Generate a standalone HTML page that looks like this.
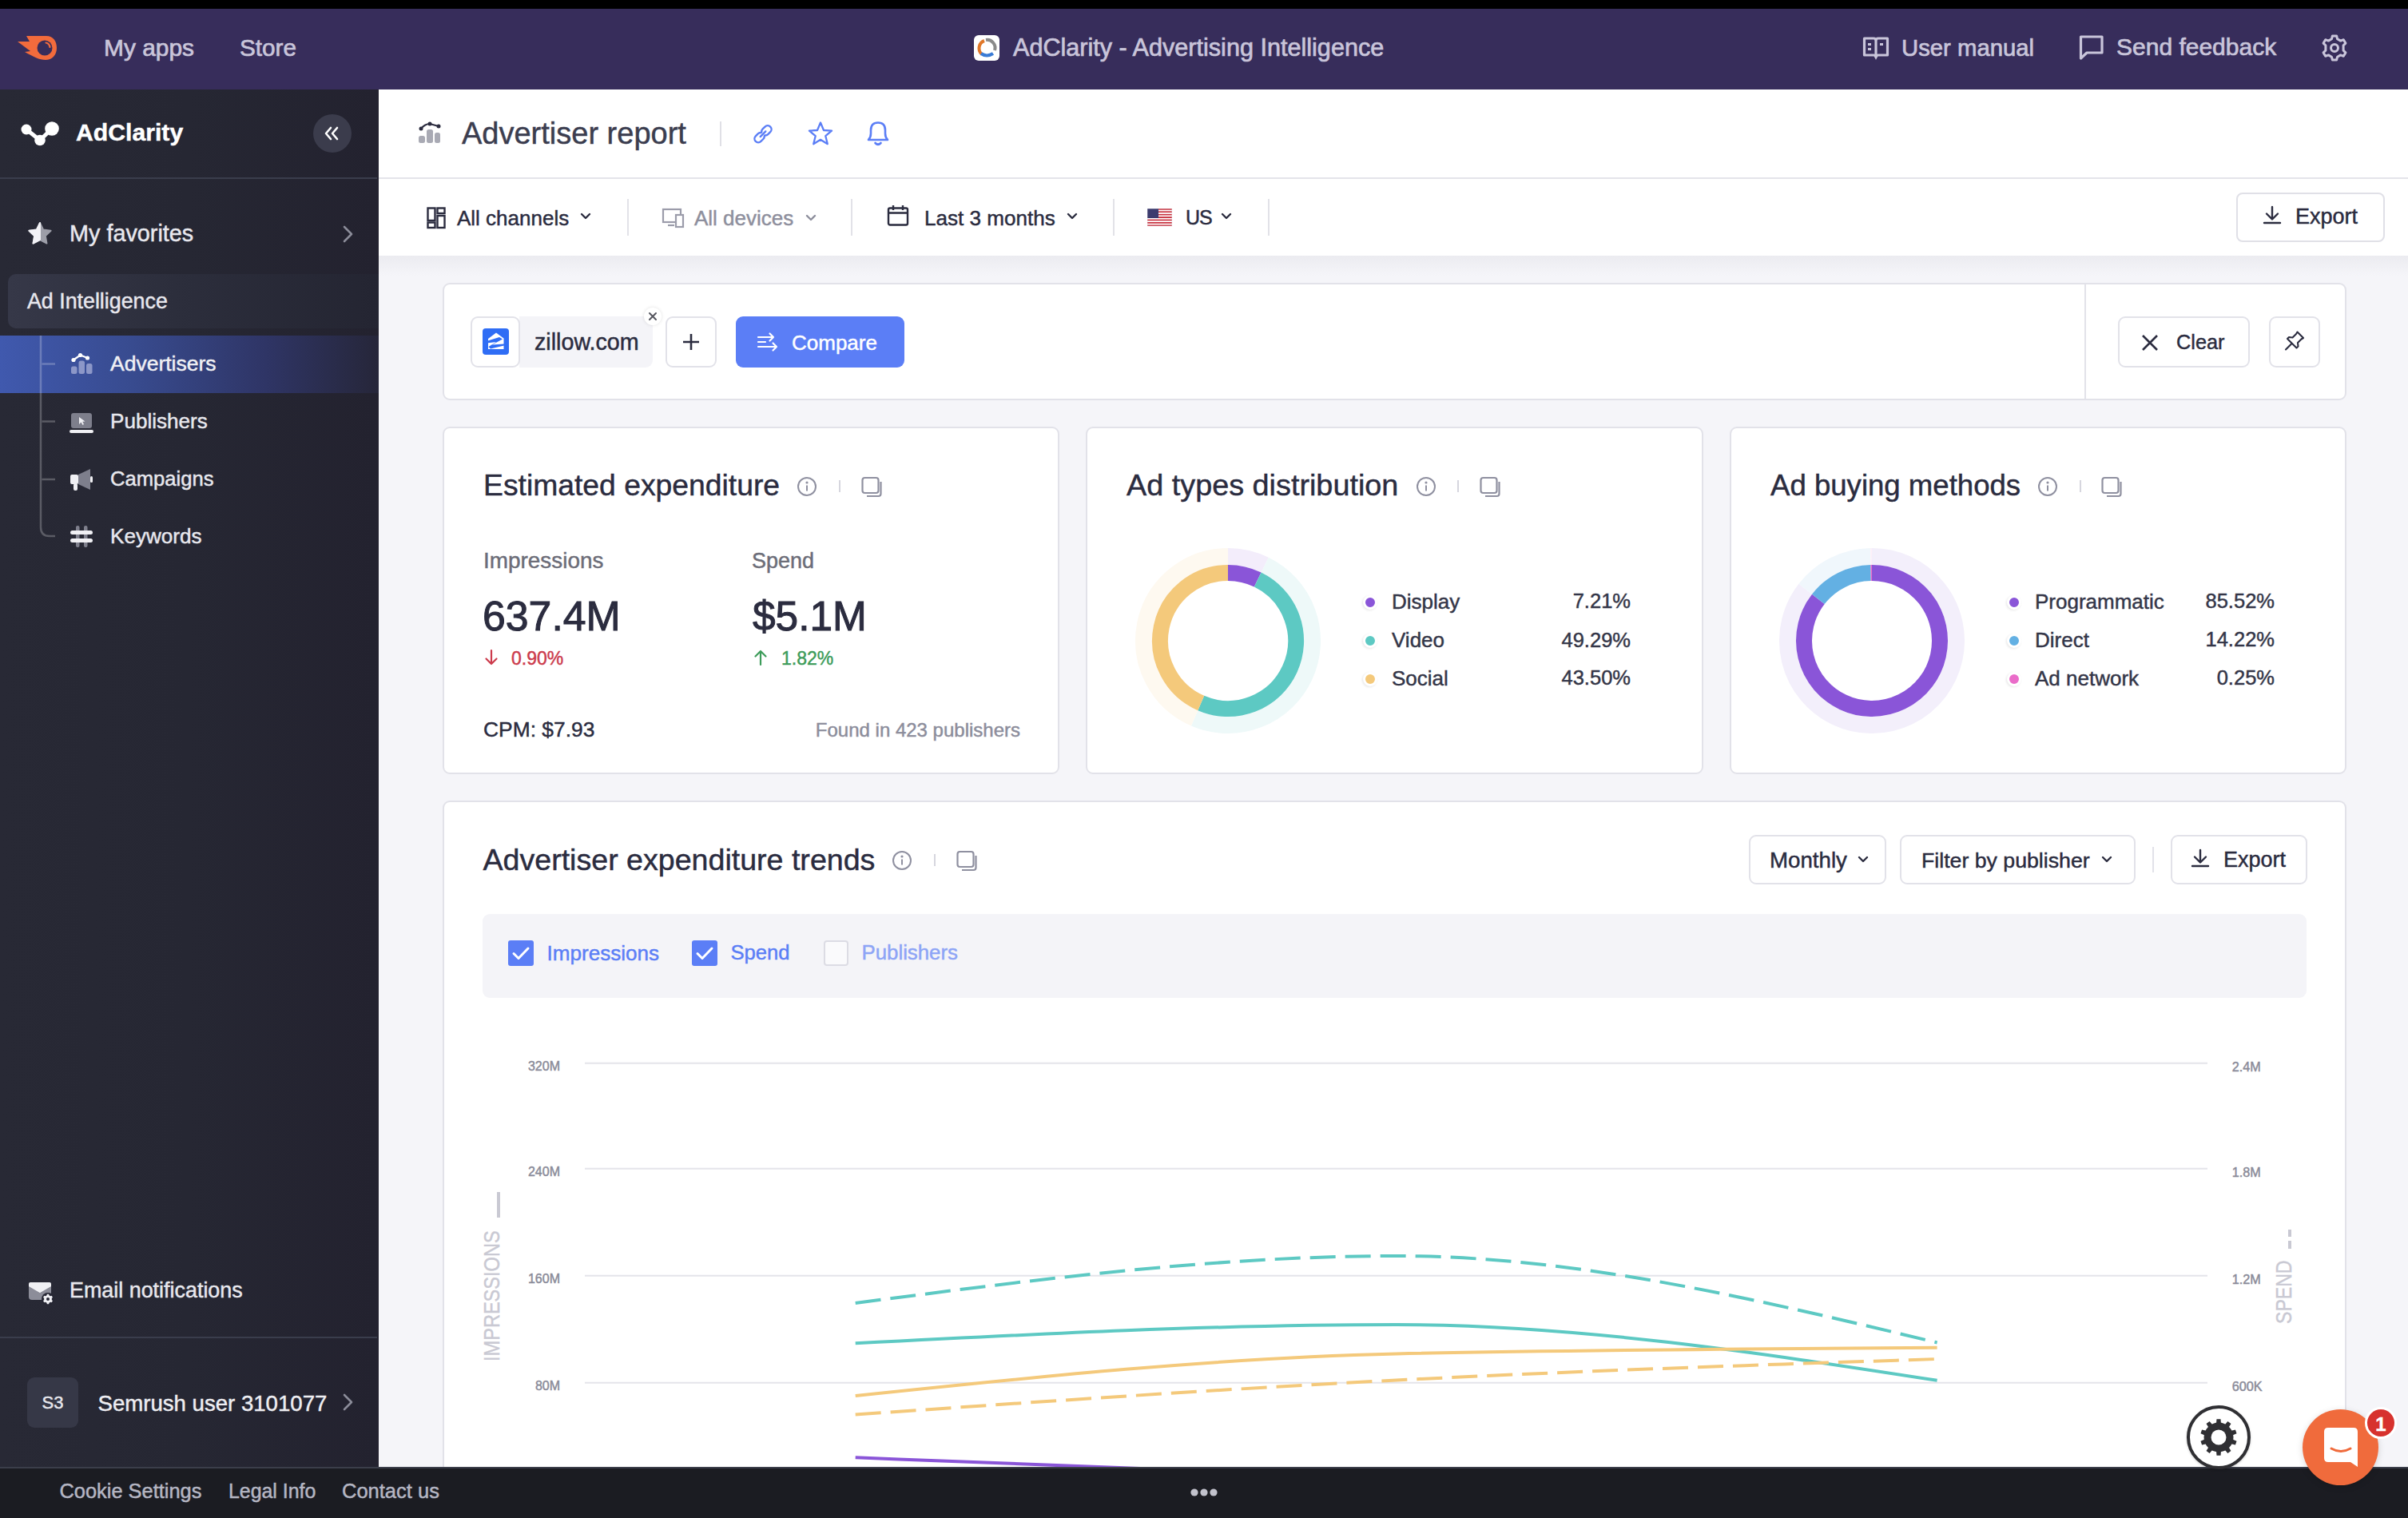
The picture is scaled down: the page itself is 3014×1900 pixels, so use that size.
<!DOCTYPE html>
<html><head><meta charset="utf-8">
<style>
html,body{margin:0;padding:0;width:3014px;height:1900px;overflow:hidden;background:#f5f5f9;}
body{position:relative;font-family:"Liberation Sans",sans-serif;}
.t{position:absolute;white-space:nowrap;-webkit-text-stroke-width:0.45px;}
.r{position:absolute;box-sizing:border-box;}
</style></head><body>
<div class="r" style="left:0px;top:0px;width:3014px;height:11px;background:#000"></div>
<div class="r" style="left:0px;top:11px;width:3014px;height:101px;background:#372d5b"></div>
<div class="r" style="left:0px;top:112px;width:474px;height:1725px;background:linear-gradient(90deg,#282935 0%,#262733 50%,#23222f 100%)"></div>
<div class="r" style="left:474px;top:112px;width:2540px;height:1725px;background:#f5f5f9"></div>
<div class="r" style="left:474px;top:112px;width:2540px;height:111px;background:#fff"></div>
<div class="r" style="left:474px;top:222px;width:2540px;height:2px;background:#e4e4ea"></div>
<div class="r" style="left:474px;top:224px;width:2540px;height:96px;background:#fff"></div>
<div class="r" style="left:474px;top:320px;width:2540px;height:36px;background:linear-gradient(#ebebf0,#f5f5f9 70%)"></div>
<svg class="r" style="left:20px;top:43px;" width="52" height="34" viewBox="0 0 52 34"><path d="M13 2 L38 2 C47 2 51 9 51 17 C51 26 45 32 37 32 C29 32 22 28 11 22 L18 21 L2 9 L17 9 Z" fill="#f26b3c"/>
<circle cx="36" cy="17" r="9.5" fill="#372d5b"/>
<path d="M37.5 10.5 A6.5 6.5 0 0 1 42.5 16" stroke="#f26b3c" stroke-width="2.2" fill="none" stroke-linecap="round"/></svg>
<div class="t " style="left:130px;top:44.5px;font-size:29.9px;line-height:29.9px;color:#c9c5da;font-weight:400;-webkit-text-stroke-width:0.7px;">My apps</div>
<div class="t " style="left:300px;top:44.7px;font-size:29.7px;line-height:29.7px;color:#c9c5da;font-weight:400;-webkit-text-stroke-width:0.7px;">Store</div>
<svg class="r" style="left:1219px;top:44px;" width="32" height="32" viewBox="0 0 32 32"><rect x="0" y="0" width="32" height="32" rx="6" fill="#fff"/>
<path d="M10 24 A10 10 0 0 1 13 7" stroke="#e0782a" stroke-width="4" fill="none"/>
<path d="M15 6 A10 10 0 0 1 26 19" stroke="#8a8a8a" stroke-width="4" fill="none"/>
<path d="M9 23 Q16 28 24 23" stroke="#3a7bd5" stroke-width="4" fill="none"/>
<circle cx="16" cy="15" r="5" fill="none" stroke="#fff" stroke-width="1"/></svg>
<div class="t " style="left:1268px;top:43.9px;font-size:30.6px;line-height:30.6px;color:#c9c5da;font-weight:400;-webkit-text-stroke-width:0.7px;">AdClarity - Advertising Intelligence</div>
<svg class="r" style="left:2331px;top:43px;" width="34" height="34" viewBox="0 0 34 34"><path d="M2.5 5 H14 Q17 5 17 8 V28 Q17 26 14 26 H2.5 Z M31.5 5 H20 Q17 5 17 8 V28 Q17 26 20 26 H31.5 Z" fill="none" stroke="#c9c5da" stroke-width="3.2" stroke-linejoin="round"/>
<rect x="7" y="11" width="4" height="3" fill="#c9c5da"/><rect x="7" y="17" width="4" height="3" fill="#c9c5da"/><rect x="22" y="11" width="4" height="3" fill="#c9c5da"/>
<path d="M15 28 L17 32 L19 28" fill="#c9c5da"/></svg>
<div class="t " style="left:2380px;top:44.7px;font-size:29.3px;line-height:29.3px;color:#c9c5da;font-weight:400;-webkit-text-stroke-width:0.7px;">User manual</div>
<svg class="r" style="left:2602px;top:43px;" width="32" height="33" viewBox="0 0 32 33"><path d="M2.5 3 H29 V23 H10 L2.5 30 Z" fill="none" stroke="#c9c5da" stroke-width="3.2" stroke-linejoin="round"/></svg>
<div class="t " style="left:2649px;top:44.1px;font-size:30px;line-height:30px;color:#c9c5da;font-weight:400;-webkit-text-stroke-width:0.7px;">Send feedback</div>
<svg class="r" style="left:2904px;top:42px;" width="36" height="36" viewBox="0 0 36 36"><g transform="translate(18,18)" fill="none" stroke="#c9c5da" stroke-width="3">
<path d="M-2.6 -15 H2.6 L3.6 -11.2 L7.6 -8.9 L11.3 -10.3 L13.9 -5.9 L11.1 -3.2 V3.2 L13.9 5.9 L11.3 10.3 L7.6 8.9 L3.6 11.2 L2.6 15 H-2.6 L-3.6 11.2 L-7.6 8.9 L-11.3 10.3 L-13.9 5.9 L-11.1 3.2 V-3.2 L-13.9 -5.9 L-11.3 -10.3 L-7.6 -8.9 L-3.6 -11.2 Z" stroke-linejoin="round"/>
<circle r="4.5"/></g></svg>
<svg class="r" style="left:24px;top:150px;" width="52" height="34" viewBox="0 0 52 34"><path d="M9 12 L26 25.5 L41 11" stroke="#fff" stroke-width="5" fill="none"/>
<circle cx="9" cy="12" r="6.5" fill="#fff"/><circle cx="26" cy="25.5" r="6.8" fill="#fff"/><circle cx="41" cy="11" r="8.8" fill="#fff"/></svg>
<div class="t " style="left:95px;top:150.9px;font-size:30.2px;line-height:30.2px;color:#ffffff;font-weight:700;">AdClarity</div>
<div class="r" style="left:392px;top:143px;width:48px;height:48px;border-radius:50%;background:#3b3c4c"></div>
<svg class="r" style="left:405px;top:157px;" width="22" height="20" viewBox="0 0 22 20"><path d="M9 3 L3 10 L9 17 M17 3 L11 10 L17 17" stroke="#fff" stroke-width="2.6" fill="none" stroke-linecap="round" stroke-linejoin="round"/></svg>
<div class="r" style="left:0px;top:222px;width:472px;height:2px;background:#3a3d4c"></div>
<svg class="r" style="left:34px;top:277px;" width="32" height="30" viewBox="0 0 32 30"><path d="M16 2 L20.2 10.6 L29.6 11.8 L22.8 18.3 L24.5 27.6 L16 23.1 L7.5 27.6 L9.2 18.3 L2.4 11.8 L11.8 10.6 Z" fill="#9d9ea8" stroke="#9d9ea8" stroke-width="2" stroke-linejoin="round"/>
<path d="M16 2 L11.8 10.6 L2.4 11.8 L9.2 18.3 L7.5 27.6 L16 23.1 Z" fill="#f2f2f6" stroke="#f2f2f6" stroke-width="2" stroke-linejoin="round"/></svg>
<div class="t " style="left:87px;top:278.4px;font-size:28.8px;line-height:28.8px;color:#e8e8ee;font-weight:400;">My favorites</div>
<svg class="r" style="left:426px;top:280px;" width="20" height="26" viewBox="0 0 20 26"><path d="M5 4 L14 13 L5 22" stroke="#8b8c99" stroke-width="2.6" fill="none" stroke-linecap="round" stroke-linejoin="round"/></svg>
<div class="r" style="left:10px;top:343px;width:464px;height:68px;border-radius:10px 0 0 10px;background:linear-gradient(90deg,#363848 0%,#2c2e3c 45%,#242532 100%)"></div>
<div class="t " style="left:34px;top:363.8px;font-size:26.8px;line-height:26.8px;color:#e8e8ee;font-weight:400;">Ad Intelligence</div>
<div class="r" style="left:0px;top:420px;width:474px;height:72px;background:linear-gradient(90deg,#4059ae 0%,#384b8f 35%,#2f3566 70%,#262639 100%)"></div>
<svg class="r" style="left:40px;top:420px;" width="40" height="260" viewBox="0 0 40 260"><path d="M11 0 V240 Q11 251 22 251 H29" stroke="rgba(255,255,255,0.24)" stroke-width="2.5" fill="none"/>
<path d="M12.5 35.6 H29 M12.5 107.6 H29 M12.5 180 H29" stroke="rgba(255,255,255,0.24)" stroke-width="2.5" fill="none"/></svg>
<svg class="r" style="left:86px;top:440px;" width="32" height="32" viewBox="0 0 32 32"><rect x="3" y="18.5" width="7.5" height="9.5" rx="2.5" fill="#8c97c8"/><rect x="12.5" y="11.5" width="7.5" height="16.5" rx="2.5" fill="#8c97c8"/><rect x="22" y="15" width="7.5" height="13" rx="2.5" fill="#8c97c8"/>
<path d="M6 10.5 L14.5 4.5 L23.5 8" stroke="#fff" stroke-width="2.2" fill="none"/><circle cx="6" cy="10.5" r="2.6" fill="#fff"/><circle cx="14.5" cy="4.5" r="2.6" fill="#fff"/><circle cx="23.5" cy="8" r="2.6" fill="#fff"/></svg>
<div class="t " style="left:138px;top:441.6px;font-size:26.5px;line-height:26.5px;color:#f0f0f4;font-weight:400;">Advertisers</div>
<svg class="r" style="left:86px;top:514px;" width="32" height="32" viewBox="0 0 32 32"><rect x="3" y="3" width="26" height="19" rx="3" fill="#7e7f8c"/><rect x="1" y="24" width="30" height="4" rx="2" fill="#f0f0f4"/>
<path d="M13 8 L13 17 L15.5 14.5 L17.5 18 L19 17 L17.2 13.8 L20.5 13.5 Z" fill="#f0f0f4"/></svg>
<div class="t " style="left:138px;top:513.9px;font-size:26.1px;line-height:26.1px;color:#e8e8ee;font-weight:400;">Publishers</div>
<svg class="r" style="left:86px;top:585px;" width="32" height="32" viewBox="0 0 32 32"><path d="M12 9 L27 2 V28 L12 21 Z" fill="#7e7f8c"/><rect x="2" y="9" width="10" height="12" rx="2" fill="#f0f0f4"/><rect x="6" y="20" width="5" height="9" rx="2" fill="#f0f0f4"/>
<rect x="27" y="11" width="3" height="8" rx="1.5" fill="#f0f0f4"/></svg>
<div class="t " style="left:138px;top:586.8px;font-size:25.6px;line-height:25.6px;color:#e8e8ee;font-weight:400;">Campaigns</div>
<svg class="r" style="left:86px;top:656px;" width="32" height="32" viewBox="0 0 32 32"><rect x="9" y="2" width="4.5" height="27" rx="2" fill="#7e7f8c"/><rect x="19" y="2" width="4.5" height="27" rx="2" fill="#7e7f8c"/>
<rect x="2" y="8" width="28" height="5" rx="2.5" fill="#f0f0f4"/><rect x="2" y="18" width="28" height="5" rx="2.5" fill="#f0f0f4"/></svg>
<div class="t " style="left:138px;top:658.4px;font-size:26.1px;line-height:26.1px;color:#e8e8ee;font-weight:400;">Keywords</div>
<svg class="r" style="left:34px;top:1602px;" width="36" height="34" viewBox="0 0 36 34"><rect x="2" y="3" width="28" height="22" rx="4" fill="#8c8d99"/><path d="M3 8 L16 16 L29 8 V4 H3 Z" fill="#f0f0f4"/>
<path d="M2 5 Q2 3 4 3 H28 Q30 3 30 5 V8 L16 16 L2 8 Z" fill="#f0f0f4"/><path d="M2 10 L16 18.5 L30 10" stroke="#8c8d99" stroke-width="0" fill="none"/>
<circle cx="26" cy="24" r="8" fill="#252633"/><path d="M24.55 19.63 L24.75 17.83 L27.25 17.83 L27.45 19.63 L29.06 20.56 L30.72 19.83 L31.97 22.00 L30.50 23.07 L30.50 24.93 L31.97 26.00 L30.72 28.17 L29.06 27.44 L27.45 28.37 L27.25 30.17 L24.75 30.17 L24.55 28.37 L22.94 27.44 L21.28 28.17 L20.03 26.00 L21.50 24.93 L21.50 23.07 L20.03 22.00 L21.28 19.83 L22.94 20.56 Z" fill="#f0f0f4"/><circle cx="26" cy="24" r="4.8" fill="#f0f0f4"/><circle cx="26" cy="24" r="2" fill="#252633"/></svg>
<div class="t " style="left:87px;top:1602.2px;font-size:26.9px;line-height:26.9px;color:#e8e8ee;font-weight:400;">Email notifications</div>
<div class="r" style="left:0px;top:1673px;width:472px;height:2px;background:#3a3d4c"></div>
<div class="r" style="left:34px;top:1724px;width:64px;height:63px;border-radius:9px;background:#363847"></div>
<div class="t " style="left:51px;top:1744.9px;font-size:22px;line-height:22px;color:#e8e8ee;font-weight:400;width:30px;text-align:center;left:51px;">S3</div>
<div class="t " style="left:122.5px;top:1743.2px;font-size:27.6px;line-height:27.6px;color:#eeeef2;font-weight:400;">Semrush user 3101077</div>
<svg class="r" style="left:426px;top:1742px;" width="20" height="26" viewBox="0 0 20 26"><path d="M5 4 L14 13 L5 22" stroke="#8b8c99" stroke-width="2.6" fill="none" stroke-linecap="round" stroke-linejoin="round"/></svg>
<svg class="r" style="left:522px;top:150px;" width="32" height="32" viewBox="0 0 32 32"><rect x="2" y="20" width="8" height="9" rx="2.5" fill="#a9aab4"/><rect x="12" y="12" width="8" height="17" rx="2.5" fill="#a9aab4"/><rect x="22" y="16" width="7" height="13" rx="2.5" fill="#a9aab4"/>
<path d="M5 11 Q10 5 16 5 L27 8" stroke="#2b2c3f" stroke-width="2.2" fill="none"/><circle cx="5" cy="11" r="2.5" fill="#2b2c3f"/><circle cx="16" cy="5" r="2.5" fill="#2b2c3f"/><circle cx="27" cy="8" r="2.5" fill="#2b2c3f"/></svg>
<div class="t " style="left:578px;top:148.3px;font-size:38px;line-height:38px;color:#3b3d4f;font-weight:400;">Advertiser report</div>
<div class="r" style="left:901px;top:152px;width:2px;height:31px;background:#e0e0e6"></div>
<svg class="r" style="left:940px;top:152px;" width="30" height="30" viewBox="0 0 30 30"><g transform="translate(15,15) rotate(45) translate(-13,-13) scale(1.04)" fill="none" stroke="#5b7ef6" stroke-width="2.3" stroke-linecap="round">
<path d="M10.2 12.6 A4.5 4.5 0 0 1 8.5 9 V5 A4.5 4.5 0 0 1 17.5 5 V9 A4.5 4.5 0 0 1 15.8 12.6"/>
<path d="M15.8 13.4 A4.5 4.5 0 0 1 17.5 17 V21 A4.5 4.5 0 0 1 8.5 21 V17 A4.5 4.5 0 0 1 10.2 13.4"/>
<path d="M13 8.5 V17.5"/></g></svg>
<svg class="r" style="left:1010px;top:151px;" width="34" height="32" viewBox="0 0 34 32"><path d="M17 2.5 L21 12 L31 12.6 L23.3 19.2 L25.8 29.2 L17 23.8 L8.2 29.2 L10.7 19.2 L3 12.6 L13 12 Z" fill="none" stroke="#5b7ef6" stroke-width="2.3" stroke-linejoin="round"/></svg>
<svg class="r" style="left:1083px;top:150px;" width="32" height="36" viewBox="0 0 32 36"><path d="M4 25 Q7 22 7 17 V13 Q7 3.5 16 3.5 Q25 3.5 25 13 V17 Q25 22 28 25 Z" fill="none" stroke="#5b7ef6" stroke-width="2.6" stroke-linejoin="round"/>
<path d="M12.5 29 Q16 32.5 19.5 29" fill="none" stroke="#5b7ef6" stroke-width="2.6" stroke-linecap="round"/></svg>
<svg class="r" style="left:532px;top:257px;" width="28" height="32" viewBox="0 0 28 32"><g fill="none" stroke="#2b2c3f" stroke-width="2.4"><rect x="3.5" y="3.5" width="9" height="15.5"/><rect x="3.5" y="21.5" width="9" height="6.5"/><rect x="15.5" y="3.5" width="9" height="6.5"/><rect x="15.5" y="13" width="9" height="15"/></g></svg>
<div class="t " style="left:572px;top:259.6px;font-size:26px;line-height:26px;color:#2b2c3f;font-weight:400;">All channels</div>
<svg class="r" style="left:726px;top:266px;" width="14" height="10" viewBox="0 0 14 10"><path d="M2 2 L7 7 L12 2" stroke="#2b2c3f" stroke-width="2.4" fill="none" stroke-linecap="round" stroke-linejoin="round"/></svg>
<div class="r" style="left:785px;top:249px;width:2px;height:46px;background:#e2e2e8"></div>
<svg class="r" style="left:827px;top:257px;" width="32" height="32" viewBox="0 0 32 32"><g fill="none" stroke="#9b9caa" stroke-width="2.2"><rect x="3" y="5" width="22" height="16"/><path d="M9 25 H17"/><rect x="19" y="12" width="9" height="15" fill="#fff"/></g></svg>
<div class="t " style="left:869px;top:259.6px;font-size:26px;line-height:26px;color:#8e8f9d;font-weight:400;">All devices</div>
<svg class="r" style="left:1007.5px;top:268px;" width="14" height="10" viewBox="0 0 14 10"><path d="M2 2 L7 7 L12 2" stroke="#8e8f9d" stroke-width="2.4" fill="none" stroke-linecap="round" stroke-linejoin="round"/></svg>
<div class="r" style="left:1065px;top:249px;width:2px;height:46px;background:#e2e2e8"></div>
<svg class="r" style="left:1109px;top:255px;" width="30" height="30" viewBox="0 0 30 30"><g fill="none" stroke="#2b2c3f" stroke-width="2.4"><rect x="3" y="5.5" width="24" height="21" rx="2"/><path d="M3 11.5 H27 M9 2 V8 M21 2 V8"/></g></svg>
<div class="t " style="left:1157px;top:259.5px;font-size:26.1px;line-height:26.1px;color:#2b2c3f;font-weight:400;">Last 3 months</div>
<svg class="r" style="left:1335px;top:266px;" width="14" height="10" viewBox="0 0 14 10"><path d="M2 2 L7 7 L12 2" stroke="#2b2c3f" stroke-width="2.4" fill="none" stroke-linecap="round" stroke-linejoin="round"/></svg>
<div class="r" style="left:1393px;top:249px;width:2px;height:46px;background:#e2e2e8"></div>
<svg class="r" style="left:1436px;top:261px;" width="31" height="22" viewBox="0 0 31 22"><defs><pattern id="st" width="31" height="3.4" patternUnits="userSpaceOnUse"><rect width="31" height="1.7" fill="#c8313e"/><rect y="1.7" width="31" height="1.7" fill="#fff"/></pattern></defs>
<rect width="31" height="22" fill="url(#st)"/><rect width="14" height="12" fill="#3c3b6e"/><rect width="31" height="22" fill="none" stroke="#d8d8e0" stroke-width="0.6"/></svg>
<div class="t " style="left:1484px;top:260.4px;font-size:25px;line-height:25px;color:#2b2c3f;font-weight:400;letter-spacing:-1px;">US</div>
<svg class="r" style="left:1528px;top:266px;" width="14" height="10" viewBox="0 0 14 10"><path d="M2 2 L7 7 L12 2" stroke="#2b2c3f" stroke-width="2.4" fill="none" stroke-linecap="round" stroke-linejoin="round"/></svg>
<div class="r" style="left:1587px;top:249px;width:2px;height:46px;background:#e2e2e8"></div>
<div class="r" style="left:2799px;top:241px;width:186px;height:62px;border:2px solid #e0e0e7;border-radius:8px;background:#fff"></div>
<svg class="r" style="left:2832px;top:257px;" width="24" height="25" viewBox="0 0 24 25"><g fill="none" stroke="#2b2c3f" stroke-width="2.4" stroke-linecap="round" stroke-linejoin="round"><path d="M12 2 V17 M5 10.5 L12 17.5 L19 10.5 M2 22 H22"/></g></svg>
<div class="t " style="left:2873px;top:258.4px;font-size:27px;line-height:27px;color:#2b2c3f;font-weight:400;">Export</div>
<div class="r" style="left:554px;top:354px;width:2383px;height:147px;background:#fff;border:2px solid #e2e2e9;border-radius:9px;"></div>
<div class="r" style="left:2609px;top:356px;width:2px;height:144px;background:#e2e2e9"></div>
<div class="r" style="left:650px;top:396px;width:167px;height:64px;background:#f4f4f8;border-radius:0 9px 9px 0"></div>
<div class="r" style="left:589px;top:396px;width:62px;height:64px;background:#fff;border:2px solid #e2e2e9;border-radius:9px"></div>
<svg class="r" style="left:604px;top:411px;" width="33" height="33" viewBox="0 0 33 33"><rect width="33" height="33" rx="4" fill="#2f6df5"/>
<path d="M17 5.5 L26.5 12.5 V26 H7 V13 Z" fill="#fff"/>
<path d="M5 16 L21 11 L25 13.5 L12 20.5 L27 19.5 V21.5 L10 25.5 L7.5 23 L17 17 L5 18.5 Z" fill="#2f6df5"/></svg>
<div class="t " style="left:669px;top:413.7px;font-size:28.7px;line-height:28.7px;color:#2b2c3f;font-weight:400;">zillow.com</div>
<div class="r" style="left:806px;top:385px;width:22px;height:22px;border-radius:50%;background:#fff;box-shadow:0 0 4px rgba(0,0,0,0.12)"></div>
<svg class="r" style="left:809px;top:388px;" width="16" height="16" viewBox="0 0 16 16"><path d="M4 4 L12 12 M12 4 L4 12" stroke="#55565f" stroke-width="2" stroke-linecap="round"/></svg>
<div class="r" style="left:833px;top:396px;width:64px;height:64px;background:#fff;border:2px solid #e2e2e9;border-radius:9px"></div>
<svg class="r" style="left:851px;top:414px;" width="28" height="28" viewBox="0 0 28 28"><path d="M14 4 V24 M4 14 H24" stroke="#2b2c3f" stroke-width="2.6"/></svg>
<div class="r" style="left:921px;top:396px;width:211px;height:64px;background:#5b7ef6;border-radius:9px"></div>
<svg class="r" style="left:946px;top:415px;" width="30" height="26" viewBox="0 0 30 26"><g fill="none" stroke="#fff" stroke-width="2.2" stroke-linecap="round" stroke-linejoin="round">
<path d="M3 7 H22 M17.5 2.5 L22 7 L17.5 11.5 M3 13 H12 M3 19 H26 M21.5 14.5 L26 19 L21.5 23.5"/></g></svg>
<div class="t " style="left:991px;top:416.0px;font-size:26px;line-height:26px;color:#ffffff;font-weight:400;">Compare</div>
<div class="r" style="left:2651px;top:396px;width:165px;height:64px;background:#fff;border:2px solid #e2e2e9;border-radius:9px"></div>
<svg class="r" style="left:2679px;top:417px;" width="24" height="24" viewBox="0 0 24 24"><path d="M3 3 L21 21 M21 3 L3 21" stroke="#2b2c3f" stroke-width="2.6"/></svg>
<div class="t " style="left:2724px;top:416.1px;font-size:25.3px;line-height:25.3px;color:#2b2c3f;font-weight:400;">Clear</div>
<div class="r" style="left:2840px;top:396px;width:64px;height:64px;background:#fff;border:2px solid #e2e2e9;border-radius:9px"></div>
<svg class="r" style="left:2857px;top:412px;" width="30" height="30" viewBox="0 0 30 30"><g fill="none" stroke="#2b2c3f" stroke-width="2.1" stroke-linejoin="round" stroke-linecap="round">
<path d="M18.5 3.5 L26 11 L23.5 12.5 L19 17 L19.5 21.5 L17.5 23.5 L6 12 L8 10 L12.5 10.5 L17 6 Z"/><path d="M11.5 18 L4 25.5"/></g></svg>
<div class="r" style="left:554px;top:534px;width:772px;height:435px;background:#fff;border:2px solid #e2e2e9;border-radius:9px;"></div>
<div class="r" style="left:1359px;top:534px;width:773px;height:435px;background:#fff;border:2px solid #e2e2e9;border-radius:9px;"></div>
<div class="r" style="left:2165px;top:534px;width:772px;height:435px;background:#fff;border:2px solid #e2e2e9;border-radius:9px;"></div>
<div class="t " style="left:605px;top:589.1px;font-size:37.3px;line-height:37.3px;color:#2b2c3f;font-weight:400;">Estimated expenditure</div>
<svg class="r" style="left:997px;top:596px;" width="26" height="26" viewBox="0 0 26 26"><circle cx="13" cy="13" r="11" fill="none" stroke="#8f90a0" stroke-width="2"/><circle cx="13" cy="8" r="1.6" fill="#8f90a0"/><path d="M13 11.5 V18.5" stroke="#8f90a0" stroke-width="2"/></svg>
<div class="r" style="left:1050px;top:601px;width:2px;height:15px;background:#d6d6de"></div>
<svg class="r" style="left:1077px;top:595px;" width="30" height="28" viewBox="0 0 30 28"><g fill="none" stroke="#8f90a0" stroke-width="2.2"><rect x="2.5" y="3" width="20" height="19" rx="3"/><path d="M25.5 8 V23 Q25.5 26 22.5 26 H8"/></g></svg>
<div class="t " style="left:605px;top:688.4px;font-size:27.9px;line-height:27.9px;color:#6c6d78;font-weight:400;">Impressions</div>
<div class="t " style="left:941px;top:689.1px;font-size:27px;line-height:27px;color:#6c6d78;font-weight:400;">Spend</div>
<div class="t " style="left:604px;top:746.0px;font-size:51.8px;line-height:51.8px;color:#2b2c3f;font-weight:400;-webkit-text-stroke-width:1px;">637.4M</div>
<div class="t " style="left:942px;top:746.3px;font-size:51.4px;line-height:51.4px;color:#2b2c3f;font-weight:400;-webkit-text-stroke-width:1px;">$5.1M</div>
<svg class="r" style="left:605px;top:812px;" width="20" height="22" viewBox="0 0 20 22"><path d="M10 2 V19 M3.5 12.5 L10 19 L16.5 12.5" fill="none" stroke="#cc3b4c" stroke-width="2.2" stroke-linecap="round" stroke-linejoin="round"/></svg>
<div class="t " style="left:640px;top:812.8px;font-size:23px;line-height:23px;color:#cc3b4c;font-weight:400;">0.90%</div>
<svg class="r" style="left:942px;top:812px;" width="20" height="22" viewBox="0 0 20 22"><path d="M10 20 V3 M3.5 9.5 L10 3 L16.5 9.5" fill="none" stroke="#3d9c5a" stroke-width="2.2" stroke-linecap="round" stroke-linejoin="round"/></svg>
<div class="t " style="left:978px;top:812.8px;font-size:23px;line-height:23px;color:#3d9c5a;font-weight:400;">1.82%</div>
<div class="t " style="left:605px;top:899.7px;font-size:26.4px;line-height:26.4px;color:#2b2c3f;font-weight:400;">CPM: $7.93</div>
<div class="t " style="right:1737px;top:901.7px;font-size:24px;line-height:24px;color:#8c8d9b;font-weight:400;">Found in 423 publishers</div>
<div class="t " style="left:1410px;top:588.7px;font-size:37.8px;line-height:37.8px;color:#2b2c3f;font-weight:400;">Ad types distribution</div>
<svg class="r" style="left:1772px;top:596px;" width="26" height="26" viewBox="0 0 26 26"><circle cx="13" cy="13" r="11" fill="none" stroke="#8f90a0" stroke-width="2"/><circle cx="13" cy="8" r="1.6" fill="#8f90a0"/><path d="M13 11.5 V18.5" stroke="#8f90a0" stroke-width="2"/></svg>
<div class="r" style="left:1824px;top:601px;width:2px;height:15px;background:#d6d6de"></div>
<svg class="r" style="left:1851px;top:595px;" width="30" height="28" viewBox="0 0 30 28"><g fill="none" stroke="#8f90a0" stroke-width="2.2"><rect x="2.5" y="3" width="20" height="19" rx="3"/><path d="M25.5 8 V23 Q25.5 26 22.5 26 H8"/></g></svg>
<div class="t " style="left:2216px;top:589.7px;font-size:36.6px;line-height:36.6px;color:#2b2c3f;font-weight:400;">Ad buying methods</div>
<svg class="r" style="left:2550px;top:596px;" width="26" height="26" viewBox="0 0 26 26"><circle cx="13" cy="13" r="11" fill="none" stroke="#8f90a0" stroke-width="2"/><circle cx="13" cy="8" r="1.6" fill="#8f90a0"/><path d="M13 11.5 V18.5" stroke="#8f90a0" stroke-width="2"/></svg>
<div class="r" style="left:2603px;top:601px;width:2px;height:15px;background:#d6d6de"></div>
<svg class="r" style="left:2629px;top:595px;" width="30" height="28" viewBox="0 0 30 28"><g fill="none" stroke="#8f90a0" stroke-width="2.2"><rect x="2.5" y="3" width="20" height="19" rx="3"/><path d="M25.5 8 V23 Q25.5 26 22.5 26 H8"/></g></svg>
<svg class="r" style="left:1417px;top:681.7px;" width="240" height="240" viewBox="0 0 240 240"><path d="M120.00 14.50 A105.5 105.5 0 0 1 166.18 25.14" stroke="#f3edfb" stroke-width="21" fill="none"/><path d="M166.18 25.14 A105.5 105.5 0 0 1 78.10 216.82" stroke="#eef9f9" stroke-width="21" fill="none"/><path d="M78.10 216.82 A105.5 105.5 0 0 1 120.00 14.50" stroke="#fef9f0" stroke-width="21" fill="none"/><path d="M120.00 35.00 A85 85 0 0 1 157.20 43.57" stroke="#8a55d8" stroke-width="20" fill="none"/><path d="M157.20 43.57 A85 85 0 0 1 86.24 198.01" stroke="#5dc9c3" stroke-width="20" fill="none"/><path d="M86.24 198.01 A85 85 0 0 1 120.00 35.00" stroke="#f4c97b" stroke-width="20" fill="none"/></svg>
<svg class="r" style="left:2223px;top:681.7px;" width="240" height="240" viewBox="0 0 240 240"><path d="M120.00 14.50 A105.5 105.5 0 1 1 36.72 55.23" stroke="#f3effb" stroke-width="21" fill="none"/><path d="M36.72 55.23 A105.5 105.5 0 0 1 118.28 14.51" stroke="#f0f7fc" stroke-width="21" fill="none"/><path d="M118.28 14.51 A105.5 105.5 0 0 1 120.07 14.50" stroke="#fdf0f9" stroke-width="21" fill="none"/><path d="M120.00 35.00 A85 85 0 1 1 52.90 67.82" stroke="#8a55d8" stroke-width="20" fill="none"/><path d="M52.90 67.82 A85 85 0 0 1 118.61 35.01" stroke="#63b0e3" stroke-width="20" fill="none"/><path d="M118.61 35.01 A85 85 0 0 1 120.05 35.00" stroke="#ea6cc9" stroke-width="20" fill="none"/></svg>
<div class="r" style="left:1706.4px;top:745px;width:18px;height:18px;border-radius:50%;background:#8a55d8;border:3px solid #fff;box-shadow:-1px 1px 3px rgba(0,0,0,0.10)"></div>
<div class="t " style="left:1742px;top:740.0px;font-size:26px;line-height:26px;color:#343648;font-weight:400;">Display</div>
<div class="t " style="right:973px;top:740.4px;font-size:25.5px;line-height:25.5px;color:#343648;font-weight:400;">7.21%</div>
<div class="r" style="left:1706.4px;top:793.2px;width:18px;height:18px;border-radius:50%;background:#5dc9c3;border:3px solid #fff;box-shadow:-1px 1px 3px rgba(0,0,0,0.10)"></div>
<div class="t " style="left:1742px;top:788.2px;font-size:26px;line-height:26px;color:#343648;font-weight:400;">Video</div>
<div class="t " style="right:973px;top:788.6px;font-size:25.5px;line-height:25.5px;color:#343648;font-weight:400;">49.29%</div>
<div class="r" style="left:1706.4px;top:841px;width:18px;height:18px;border-radius:50%;background:#f4c97b;border:3px solid #fff;box-shadow:-1px 1px 3px rgba(0,0,0,0.10)"></div>
<div class="t " style="left:1742px;top:836.0px;font-size:26px;line-height:26px;color:#343648;font-weight:400;">Social</div>
<div class="t " style="right:973px;top:836.4px;font-size:25.5px;line-height:25.5px;color:#343648;font-weight:400;">43.50%</div>
<div class="r" style="left:2512.4px;top:745px;width:18px;height:18px;border-radius:50%;background:#8a55d8;border:3px solid #fff;box-shadow:-1px 1px 3px rgba(0,0,0,0.10)"></div>
<div class="t " style="left:2547px;top:740.0px;font-size:26px;line-height:26px;color:#343648;font-weight:400;">Programmatic</div>
<div class="t " style="right:167px;top:740.4px;font-size:25.5px;line-height:25.5px;color:#343648;font-weight:400;">85.52%</div>
<div class="r" style="left:2512.4px;top:793px;width:18px;height:18px;border-radius:50%;background:#63b0e3;border:3px solid #fff;box-shadow:-1px 1px 3px rgba(0,0,0,0.10)"></div>
<div class="t " style="left:2547px;top:788.0px;font-size:26px;line-height:26px;color:#343648;font-weight:400;">Direct</div>
<div class="t " style="right:167px;top:788.4px;font-size:25.5px;line-height:25.5px;color:#343648;font-weight:400;">14.22%</div>
<div class="r" style="left:2512.4px;top:840.5px;width:18px;height:18px;border-radius:50%;background:#ea6cc9;border:3px solid #fff;box-shadow:-1px 1px 3px rgba(0,0,0,0.10)"></div>
<div class="t " style="left:2547px;top:835.5px;font-size:26px;line-height:26px;color:#343648;font-weight:400;">Ad network</div>
<div class="t " style="right:167px;top:835.9px;font-size:25.5px;line-height:25.5px;color:#343648;font-weight:400;">0.25%</div>
<div class="r" style="left:554px;top:1002px;width:2383px;height:900px;background:#fff;border:2px solid #e2e2e9;border-radius:9px;"></div>
<div class="t " style="left:604.5px;top:1057.9px;font-size:37.6px;line-height:37.6px;color:#2b2c3f;font-weight:400;">Advertiser expenditure trends</div>
<svg class="r" style="left:1116px;top:1064px;" width="26" height="26" viewBox="0 0 26 26"><circle cx="13" cy="13" r="11" fill="none" stroke="#8f90a0" stroke-width="2"/><circle cx="13" cy="8" r="1.6" fill="#8f90a0"/><path d="M13 11.5 V18.5" stroke="#8f90a0" stroke-width="2"/></svg>
<div class="r" style="left:1169px;top:1069px;width:2px;height:15px;background:#d6d6de"></div>
<svg class="r" style="left:1196px;top:1063px;" width="30" height="28" viewBox="0 0 30 28"><g fill="none" stroke="#8f90a0" stroke-width="2.2"><rect x="2.5" y="3" width="20" height="19" rx="3"/><path d="M25.5 8 V23 Q25.5 26 22.5 26 H8"/></g></svg>
<div class="r" style="left:2189px;top:1045px;width:172px;height:62px;background:#fff;border:2px solid #e2e2e9;border-radius:9px"></div>
<div class="t " style="left:2215px;top:1062.8px;font-size:27.7px;line-height:27.7px;color:#2b2c3f;font-weight:400;">Monthly</div>
<svg class="r" style="left:2325px;top:1071px;" width="14" height="10" viewBox="0 0 14 10"><path d="M2 2 L7 7 L12 2" stroke="#2b2c3f" stroke-width="2.4" fill="none" stroke-linecap="round" stroke-linejoin="round"/></svg>
<div class="r" style="left:2378px;top:1045px;width:295px;height:62px;background:#fff;border:2px solid #e2e2e9;border-radius:9px"></div>
<div class="t " style="left:2405px;top:1063.6px;font-size:26.7px;line-height:26.7px;color:#2b2c3f;font-weight:400;">Filter by publisher</div>
<svg class="r" style="left:2630px;top:1071px;" width="14" height="10" viewBox="0 0 14 10"><path d="M2 2 L7 7 L12 2" stroke="#2b2c3f" stroke-width="2.4" fill="none" stroke-linecap="round" stroke-linejoin="round"/></svg>
<div class="r" style="left:2694px;top:1060px;width:2px;height:32px;background:#e2e2e9"></div>
<div class="r" style="left:2717px;top:1045px;width:171px;height:62px;background:#fff;border:2px solid #e2e2e9;border-radius:9px"></div>
<svg class="r" style="left:2742px;top:1062px;" width="24" height="25" viewBox="0 0 24 25"><g fill="none" stroke="#2b2c3f" stroke-width="2.4" stroke-linecap="round" stroke-linejoin="round"><path d="M12 2 V17 M5 10.5 L12 17.5 L19 10.5 M2 22 H22"/></g></svg>
<div class="t " style="left:2783px;top:1063.3px;font-size:27px;line-height:27px;color:#2b2c3f;font-weight:400;">Export</div>
<div class="r" style="left:604px;top:1144px;width:2283px;height:105px;background:#f4f4f8;border-radius:9px"></div>
<svg class="r" style="left:636px;top:1177px;" width="32" height="32" viewBox="0 0 32 32"><rect width="32" height="32" rx="3" fill="#5b7ef6"/><path d="M7 16.5 L13 22.5 L25 10" stroke="#fff" stroke-width="3" fill="none" stroke-linecap="round" stroke-linejoin="round"/></svg>
<div class="t " style="left:684.5px;top:1179.7px;font-size:26.1px;line-height:26.1px;color:#5b7ef6;font-weight:400;">Impressions</div>
<svg class="r" style="left:866px;top:1177px;" width="32" height="32" viewBox="0 0 32 32"><rect width="32" height="32" rx="3" fill="#5b7ef6"/><path d="M7 16.5 L13 22.5 L25 10" stroke="#fff" stroke-width="3" fill="none" stroke-linecap="round" stroke-linejoin="round"/></svg>
<div class="t " style="left:914.5px;top:1180.1px;font-size:25.6px;line-height:25.6px;color:#5b7ef6;font-weight:400;">Spend</div>
<div class="r" style="left:1031px;top:1177px;width:31px;height:32px;background:#fafafc;border:2px solid #dcdce4;border-radius:4px"></div>
<div class="t " style="left:1078.5px;top:1180.0px;font-size:25.8px;line-height:25.8px;color:#8da4f6;font-weight:400;">Publishers</div>
<svg class="r" style="left:0px;top:0px;pointer-events:none;" width="3014" height="1900" viewBox="0 0 3014 1900"><path d="M732 1330.7 H2763" stroke="#e4e4ea" stroke-width="2"/><path d="M732 1462.7 H2763" stroke="#e4e4ea" stroke-width="2"/><path d="M732 1596.8 H2763" stroke="#e4e4ea" stroke-width="2"/><path d="M732 1730.7 H2763" stroke="#e4e4ea" stroke-width="2"/><path d="M1070.70 1631.00 C1296.33 1601.50 1521.97 1572.00 1747.60 1572.00 C1973.27 1572.00 2198.93 1626.25 2424.60 1680.50" stroke="#5dc9c3" stroke-width="4" fill="none" stroke-dasharray="32 12"/><path d="M1070.70 1681.30 C1296.33 1669.65 1521.97 1658.00 1747.60 1658.00 C1973.27 1658.00 2198.93 1692.90 2424.60 1727.80" stroke="#5dc9c3" stroke-width="4" fill="none"/><path d="M1070.70 1747.00 C1296.33 1723.32 1521.97 1699.63 1747.60 1694.50 C1973.27 1689.37 2198.93 1688.08 2424.60 1686.80" stroke="#f4c97b" stroke-width="4" fill="none"/><path d="M1070.70 1770.50 C1296.33 1754.79 1521.97 1739.08 1747.60 1727.50 C1973.27 1715.92 2198.93 1708.46 2424.60 1701.00" stroke="#f4c97b" stroke-width="4" fill="none" stroke-dasharray="32 12"/><path d="M1070.70 1824.30 C1296.33 1833.68 1521.97 1843.05 1747.60 1850.00 C1973.27 1856.95 2198.93 1861.48 2424.60 1866.00" stroke="#8a55d8" stroke-width="4" fill="none"/></svg>
<div class="t " style="right:2313px;top:1326.8px;font-size:16px;line-height:16px;color:#8a8b99;font-weight:400;">320M</div>
<div class="t " style="right:2313px;top:1458.8px;font-size:16px;line-height:16px;color:#8a8b99;font-weight:400;">240M</div>
<div class="t " style="right:2313px;top:1592.9px;font-size:16px;line-height:16px;color:#8a8b99;font-weight:400;">160M</div>
<div class="t " style="right:2313px;top:1726.8px;font-size:16px;line-height:16px;color:#8a8b99;font-weight:400;">80M</div>
<div class="t " style="left:2793.7px;top:1326.6px;font-size:16.2px;line-height:16.2px;color:#8a8b99;font-weight:400;">2.4M</div>
<div class="t " style="left:2793.7px;top:1458.6px;font-size:16.2px;line-height:16.2px;color:#8a8b99;font-weight:400;">1.8M</div>
<div class="t " style="left:2793.7px;top:1592.7px;font-size:16.2px;line-height:16.2px;color:#8a8b99;font-weight:400;">1.2M</div>
<div class="t " style="left:2793.7px;top:1726.6px;font-size:16.2px;line-height:16.2px;color:#8a8b99;font-weight:400;">600K</div>
<div class="t" style="left:603px;top:1703.5px;transform-origin:0 0;transform:rotate(-90deg) scaleX(0.8725);font-size:27px;line-height:27px;color:#c9c9d3;">IMPRESSIONS</div>
<div class="r" style="left:622px;top:1492px;width:4px;height:32px;background:#c9c9d3"></div>
<div class="t" style="left:2845.5px;top:1656.5px;transform-origin:0 0;transform:rotate(-90deg) scaleX(0.854);font-size:27px;line-height:27px;color:#c9c9d3;">SPEND</div>
<div class="r" style="left:2864px;top:1539px;width:4px;height:9px;background:#c9c9d3"></div>
<div class="r" style="left:2864px;top:1553px;width:4px;height:10px;background:#c9c9d3"></div>
<div class="r" style="left:0px;top:1837px;width:3014px;height:63px;background:#1b1c22"></div>
<div class="r" style="left:0px;top:1836px;width:3014px;height:2px;background:#3b3e4a"></div>
<div class="t " style="left:74.5px;top:1853.9px;font-size:25.4px;line-height:25.4px;color:#b5b6c3;font-weight:400;-webkit-text-stroke-width:0.5px;">Cookie Settings</div>
<div class="t " style="left:286px;top:1854.3px;font-size:24.9px;line-height:24.9px;color:#b5b6c3;font-weight:400;-webkit-text-stroke-width:0.5px;">Legal Info</div>
<div class="t " style="left:428px;top:1853.8px;font-size:25.5px;line-height:25.5px;color:#b5b6c3;font-weight:400;-webkit-text-stroke-width:0.5px;">Contact us</div>
<svg class="r" style="left:1488px;top:1860px;" width="38" height="16" viewBox="0 0 38 16"><circle cx="7" cy="8" r="4.6" fill="#c2c2cc"/><circle cx="19" cy="8" r="4.6" fill="#c2c2cc"/><circle cx="31" cy="8" r="4.6" fill="#c2c2cc"/></svg>
<div class="r" style="left:2736.5px;top:1759px;width:80px;height:80px;border-radius:50%;background:#fff;border:4px solid #2f2f33;box-shadow:0 1px 3px rgba(0,0,0,0.2)"></div>
<svg class="r" style="left:2748.5px;top:1771px;" width="56" height="56" viewBox="0 0 56 56"><path d="M25.04 10.75 L25.48 5.14 L30.52 5.14 L30.96 10.75 L35.74 12.31 L39.39 8.02 L43.48 10.99 L40.53 15.79 L43.49 19.85 L48.96 18.53 L50.52 23.34 L45.32 25.49 L45.32 30.51 L50.52 32.66 L48.96 37.47 L43.49 36.15 L40.53 40.21 L43.48 45.01 L39.39 47.98 L35.74 43.69 L30.96 45.25 L30.52 50.86 L25.48 50.86 L25.04 45.25 L20.26 43.69 L16.61 47.98 L12.52 45.01 L15.47 40.21 L12.51 36.15 L7.04 37.47 L5.48 32.66 L10.68 30.51 L10.68 25.49 L5.48 23.34 L7.04 18.53 L12.51 19.85 L15.47 15.79 L12.52 10.99 L16.61 8.02 L20.26 12.31 Z" fill="#2f2f33"/><circle cx="28" cy="28" r="18.5" fill="#2f2f33"/><circle cx="28" cy="28" r="9.5" fill="#fff"/></svg>
<div class="r" style="left:2882px;top:1763.5px;width:95px;height:95px;border-radius:50%;background:#f06b3c;box-shadow:0 2px 8px rgba(0,0,0,0.15)"></div>
<svg class="r" style="left:2906px;top:1785px;" width="50" height="54" viewBox="0 0 50 54"><path d="M3 7 Q3 2 8 2 H40 Q45 2 45 7 V51 L36 45 H8 Q3 45 3 40 Z" fill="#fff"/><path d="M12 28 Q24 35 36 28" stroke="#f06b3c" stroke-width="3" fill="none" stroke-linecap="round"/></svg>
<div class="r" style="left:2960px;top:1761px;width:40px;height:40px;border-radius:50%;background:#d7322e;border:3px solid #fff"></div>
<div class="t " style="left:2960px;top:1770.7px;font-size:24px;line-height:24px;color:#fff;font-weight:700;width:40px;text-align:center;">1</div>
</body></html>
